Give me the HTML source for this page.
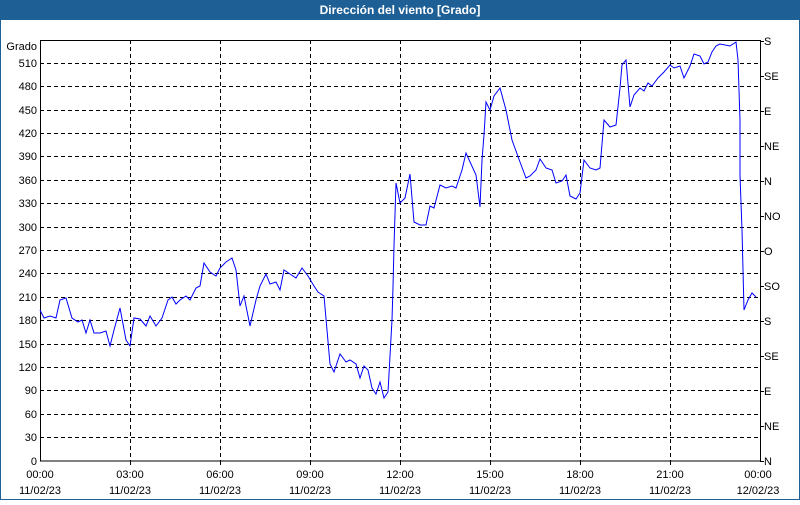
<!DOCTYPE html>
<html><head><style>
body{margin:0;width:800px;height:500px;overflow:hidden;background:#fff;font-family:"Liberation Sans",sans-serif}
</style></head><body>
<svg width="800" height="500" xmlns="http://www.w3.org/2000/svg" font-family="Liberation Sans, sans-serif" font-size="11">
<rect x="0" y="0" width="800" height="500" fill="#fff"/>
<rect x="0.5" y="0.5" width="799" height="499" fill="none" stroke="#1e5f96"/>
<rect x="0" y="0" width="800" height="20" fill="#1e5f96"/>
<text x="400" y="14" fill="#fff" font-weight="bold" font-size="12" text-anchor="middle">Dirección del viento [Grado]</text>
<g stroke="#000" stroke-dasharray="4,3" stroke-width="1">
<line x1="40" x2="760" y1="63.5" y2="63.5"/><line x1="40" x2="760" y1="86.5" y2="86.5"/><line x1="40" x2="760" y1="110.5" y2="110.5"/><line x1="40" x2="760" y1="133.5" y2="133.5"/><line x1="40" x2="760" y1="156.5" y2="156.5"/><line x1="40" x2="760" y1="180.5" y2="180.5"/><line x1="40" x2="760" y1="203.5" y2="203.5"/><line x1="40" x2="760" y1="227.5" y2="227.5"/><line x1="40" x2="760" y1="250.5" y2="250.5"/><line x1="40" x2="760" y1="273.5" y2="273.5"/><line x1="40" x2="760" y1="297.5" y2="297.5"/><line x1="40" x2="760" y1="320.5" y2="320.5"/><line x1="40" x2="760" y1="344.5" y2="344.5"/><line x1="40" x2="760" y1="367.5" y2="367.5"/><line x1="40" x2="760" y1="390.5" y2="390.5"/><line x1="40" x2="760" y1="414.5" y2="414.5"/><line x1="40" x2="760" y1="437.5" y2="437.5"/>
<line x1="130.5" x2="130.5" y1="40" y2="461"/><line x1="220.5" x2="220.5" y1="40" y2="461"/><line x1="310.5" x2="310.5" y1="40" y2="461"/><line x1="400.5" x2="400.5" y1="40" y2="461"/><line x1="490.5" x2="490.5" y1="40" y2="461"/><line x1="580.5" x2="580.5" y1="40" y2="461"/><line x1="670.5" x2="670.5" y1="40" y2="461"/>
</g>
<rect x="40.5" y="40.5" width="720" height="420.5" fill="none" stroke="#000"/>
<g stroke="#000">
<line x1="130.5" x2="130.5" y1="461" y2="465"/><line x1="220.5" x2="220.5" y1="461" y2="465"/><line x1="310.5" x2="310.5" y1="461" y2="465"/><line x1="400.5" x2="400.5" y1="461" y2="465"/><line x1="490.5" x2="490.5" y1="461" y2="465"/><line x1="580.5" x2="580.5" y1="461" y2="465"/><line x1="670.5" x2="670.5" y1="461" y2="465"/>
</g>
<polyline fill="none" stroke="#0000ff" stroke-width="1" points="40,310 44,318 50,316 56,318 60,300 66,298 72,318 78,322 82,320 86,333 90,320 94,333 100,333 106,331 110,346 114,330 120,308 126,340 130,346 134,318 140,319 146,326 150,316 156,326 162,318 168,300 172,297 176,304 180,300 186,296 190,300 196,288 200,286 204,263 210,272 216,276 220,268 226,262 232,258 236,270 240,306 244,296 250,326 256,300 260,286 266,274 270,284 276,282 280,290 284,270 290,274 296,278 302,268 308,276 314,286 318,292 324,296 330,364 334,372 340,354 346,362 350,360 356,364 360,378 364,366 368,370 372,388 376,394 380,382 384,398 388,392 392,320 393,287 394,246 396,183 400,203 405,198 410,174 414,222 420,225 426,225 430,206 434,208 440,185 446,188 452,186 456,188 462,170 466,153 476,175 480,207 482,160 484,135 486,102 490,110 494,96 500,88 506,110 512,140 520,162 526,178 530,176 536,170 540,159 546,168 552,170 556,183 562,181 566,175 570,196 576,199 580,193 584,160 590,168 596,170 600,168 604,120 610,127 616,125 620,88 622,65 626,60 630,107 634,95 640,88 644,91 648,83 652,86 658,78 664,72 670,65 674,68 680,66 684,78 690,66 694,54 700,56 704,64 708,62 712,52 716,46 720,44 730,46 736,42 738,60 740,120 740,175 742,230 744,310 748,300 752,293 756,297"/>
<g fill="#000" text-anchor="end">
<text x="37" y="50">Grado</text>
<text x="37" y="67">510</text><text x="37" y="90">480</text><text x="37" y="114">450</text><text x="37" y="137">420</text><text x="37" y="160">390</text><text x="37" y="184">360</text><text x="37" y="207">330</text><text x="37" y="231">300</text><text x="37" y="254">270</text><text x="37" y="277">240</text><text x="37" y="301">210</text><text x="37" y="324">180</text><text x="37" y="348">150</text><text x="37" y="371">120</text><text x="37" y="394">90</text><text x="37" y="418">60</text><text x="37" y="441">30</text><text x="37" y="465">0</text>
</g>
<g stroke="#000"><line x1="760" x2="764" y1="41.5" y2="41.5"/><line x1="760" x2="764" y1="76.5" y2="76.5"/><line x1="760" x2="764" y1="111.5" y2="111.5"/><line x1="760" x2="764" y1="146.5" y2="146.5"/><line x1="760" x2="764" y1="181.5" y2="181.5"/><line x1="760" x2="764" y1="216.5" y2="216.5"/><line x1="760" x2="764" y1="251.5" y2="251.5"/><line x1="760" x2="764" y1="286.5" y2="286.5"/><line x1="760" x2="764" y1="321.5" y2="321.5"/><line x1="760" x2="764" y1="356.5" y2="356.5"/><line x1="760" x2="764" y1="391.5" y2="391.5"/><line x1="760" x2="764" y1="426.5" y2="426.5"/><line x1="760" x2="764" y1="461.5" y2="461.5"/></g>
<g fill="#000">
<text x="764" y="45">S</text><text x="764" y="80">SE</text><text x="764" y="115">E</text><text x="764" y="150">NE</text><text x="764" y="185">N</text><text x="764" y="220">NO</text><text x="764" y="255">O</text><text x="764" y="290">SO</text><text x="764" y="325">S</text><text x="764" y="360">SE</text><text x="764" y="395">E</text><text x="764" y="430">NE</text><text x="764" y="465">N</text>
</g>
<g fill="#000" text-anchor="middle">
<text x="40" y="478">00:00</text><text x="40" y="494">11/02/23</text>
<text x="130" y="478">03:00</text><text x="130" y="494">11/02/23</text>
<text x="220" y="478">06:00</text><text x="220" y="494">11/02/23</text>
<text x="310" y="478">09:00</text><text x="310" y="494">11/02/23</text>
<text x="400" y="478">12:00</text><text x="400" y="494">11/02/23</text>
<text x="490" y="478">15:00</text><text x="490" y="494">11/02/23</text>
<text x="580" y="478">18:00</text><text x="580" y="494">11/02/23</text>
<text x="670" y="478">21:00</text><text x="670" y="494">11/02/23</text>
<text x="758" y="478">00:00</text><text x="758" y="494">12/02/23</text>
</g>
</svg>
</body></html>
